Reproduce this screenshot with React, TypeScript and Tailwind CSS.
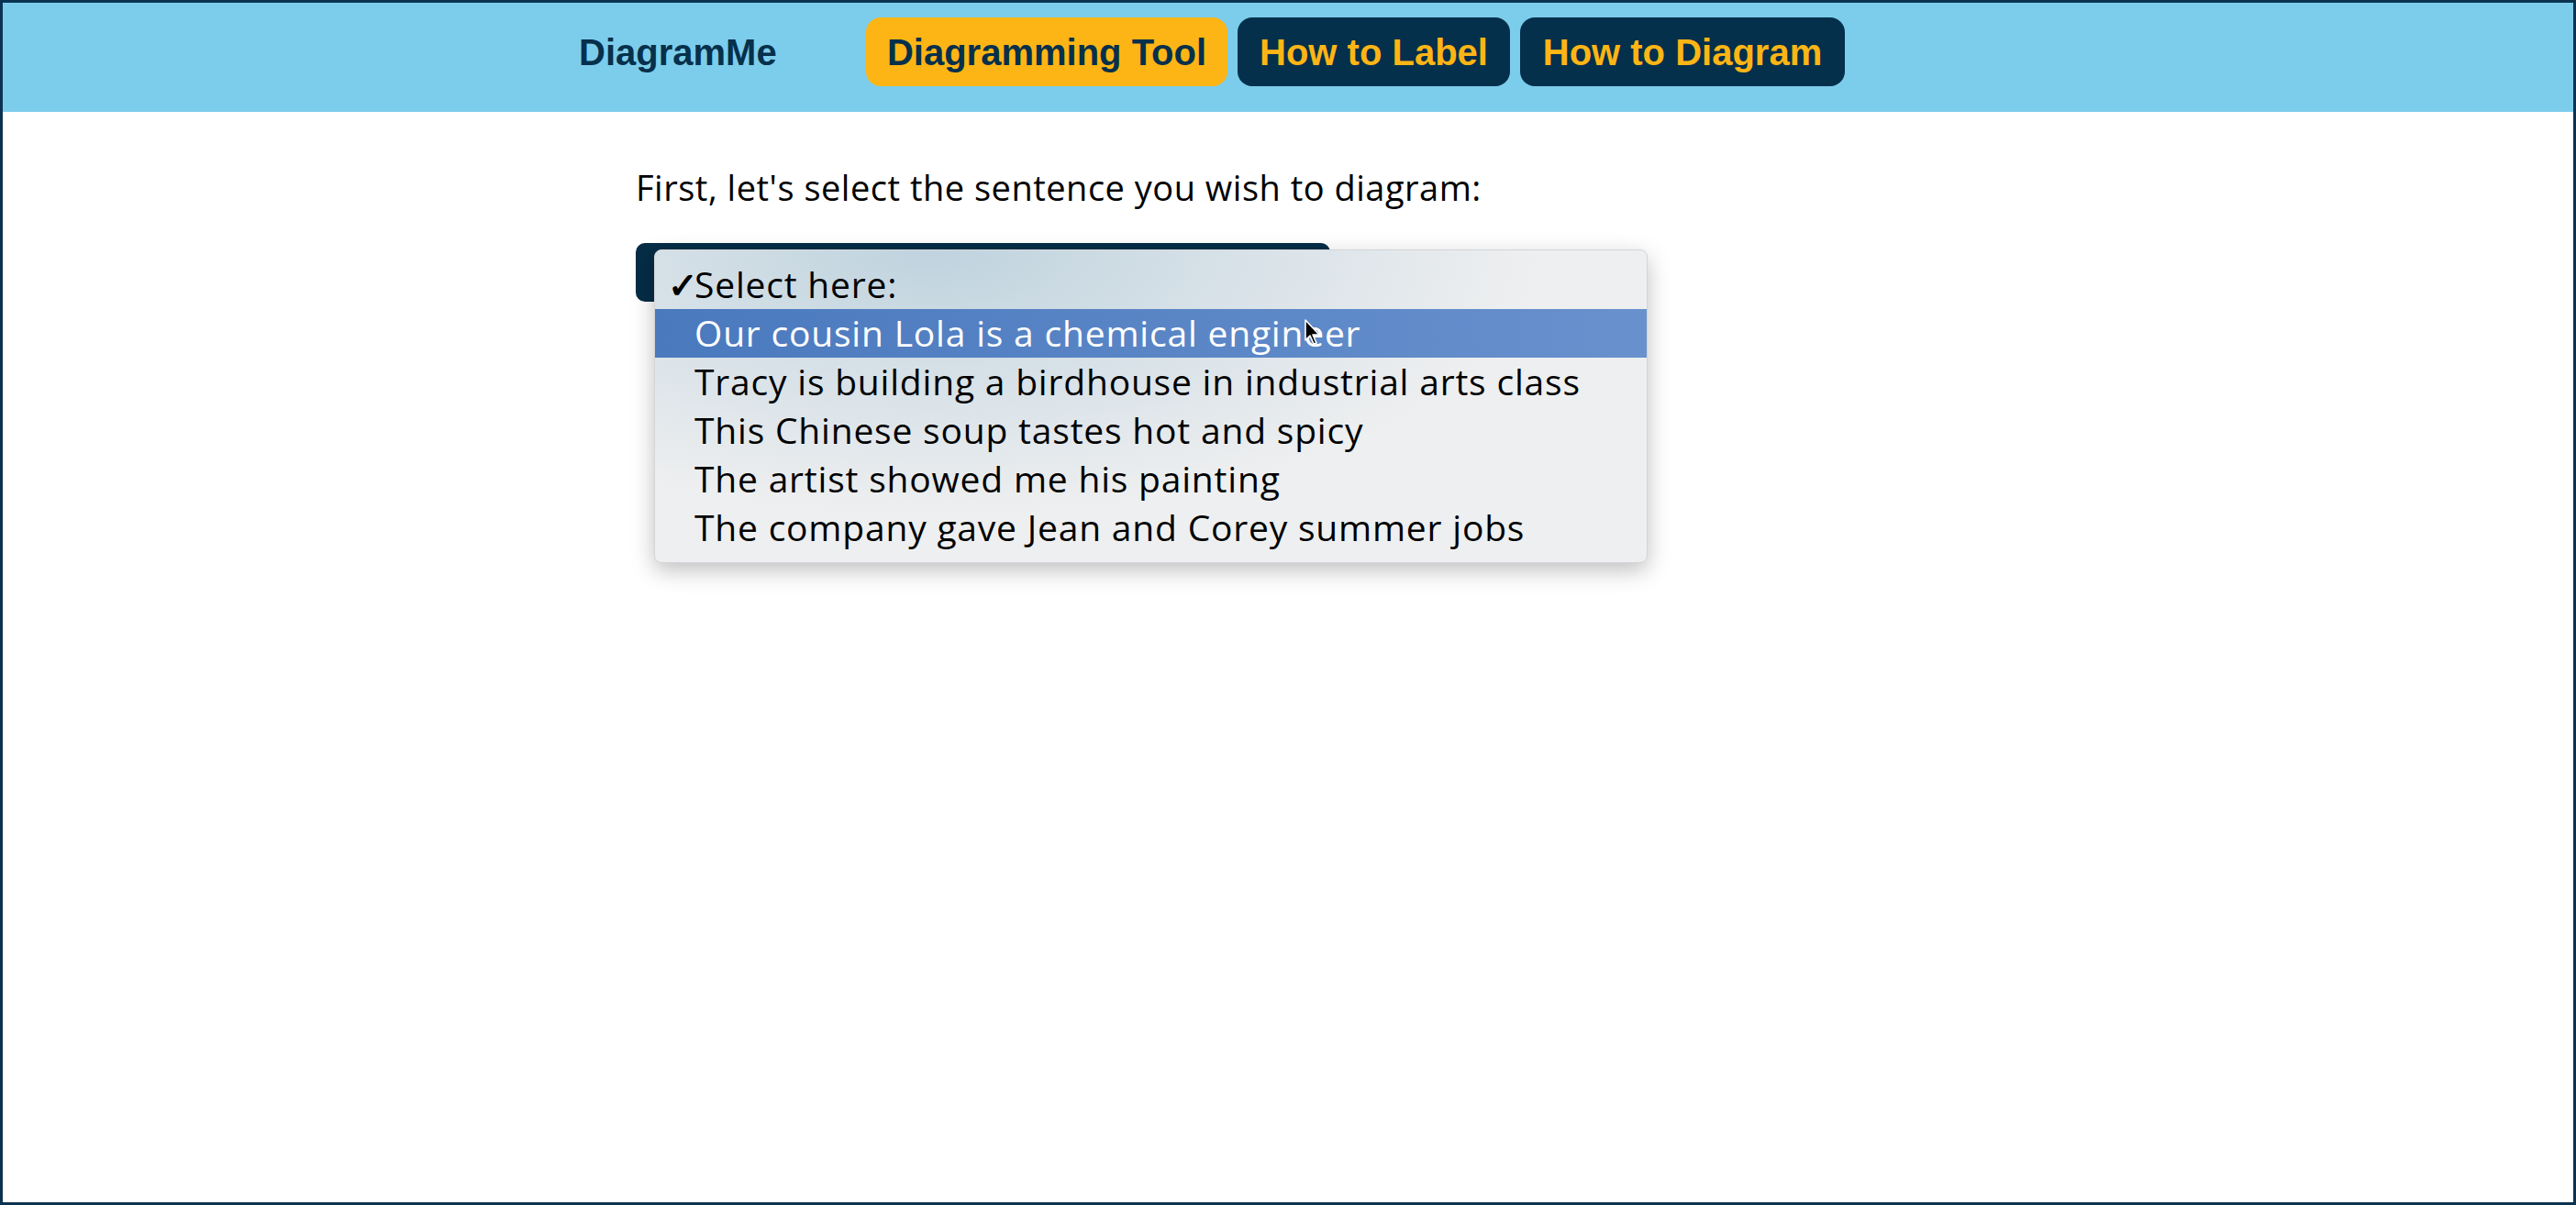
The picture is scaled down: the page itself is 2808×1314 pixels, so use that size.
import { useState } from "react";

const sentences = [
    "Our cousin Lola is a chemical engineer",
    "Tracy is building a birdhouse in industrial arts class",
    "This Chinese soup tastes hot and spicy",
    "The artist showed me his painting",
    "The company gave Jean and Corey summer jobs",
];

function Cursor() {
    return (
        <svg width="22" height="32" viewBox="0 0 22 32" className="absolute left-[707px] top-[10px]">
            <path d="M2 2 L2 24 L7 19 L11 28 L14 27 L10 18 L17 18 Z" fill="#000" stroke="#fff" strokeWidth="1.6" strokeLinejoin="round" />
        </svg>
    );
}

function App() {
    const [hovered] = useState(0);

    return (
        <div className="h-screen w-full overflow-hidden border-[3px] border-[#0b3350] bg-white font-['Liberation_Sans',Arial,sans-serif]">
            <header className="flex h-[119px] items-start bg-[#7ccdeb] pl-[628px] pt-[16px]">
                <div className="flex h-[75px] w-[313px] items-center text-[40px] font-bold text-[#06304b]">DiagramMe</div>
                <nav className="flex gap-[11px]">
                    <button className="h-[75px] w-[394px] rounded-[16px] bg-[#fdb515] text-[40px] font-bold text-[#06304b]">Diagramming Tool</button>
                    <button className="h-[75px] w-[297px] rounded-[16px] bg-[#04304b] text-[40px] font-bold text-[#fdb515]">How to Label</button>
                    <button className="h-[75px] w-[354px] rounded-[16px] bg-[#04304b] text-[40px] font-bold text-[#fdb515]">How to Diagram</button>
                </nav>
            </header>

            <main className="pl-[690px] pt-[60px] font-['Open_Sans',sans-serif]">
                <p className="text-[38px] leading-[44px] tracking-[0.5px] text-black">First, let's select the sentence you wish to diagram:</p>

                <div className="relative mt-[39px] h-[64px] w-[757px] rounded-[10px] bg-[#052d46]">
                    <div className="absolute left-[20px] top-[7px] w-[1083px] overflow-hidden rounded-[8px] border border-[#d3d5d8] bg-[#eeeff0] py-[11px] shadow-[0_8px_24px_rgba(0,0,0,0.25)]">
                        <div className="pointer-events-none absolute inset-0 bg-[radial-gradient(ellipse_at_28%_0%,#bfd3de_0%,rgba(200,216,226,0.6)_30%,transparent_60%)]" />
                        <div className="relative flex h-[53px] items-center pl-[14px] text-[39px] tracking-[0.8px] text-black">
                            <span className="w-[29px] font-bold">✓</span>
                            <span>Select here:</span>
                        </div>
                        {sentences.map((s, i) => (
                            <div
                                key={s}
                                className={
                                    "relative flex h-[53px] items-center pl-[43px] text-[39px] tracking-[0.8px] " +
                                    (i === hovered ? "bg-linear-to-r from-[#4a79be] to-[#6891cd] text-white" : "text-black")
                                }
                            >
                                {s}
                                {i === hovered && <Cursor />}
                            </div>
                        ))}
                    </div>
                </div>
            </main>
        </div>
    );
}

export default App
